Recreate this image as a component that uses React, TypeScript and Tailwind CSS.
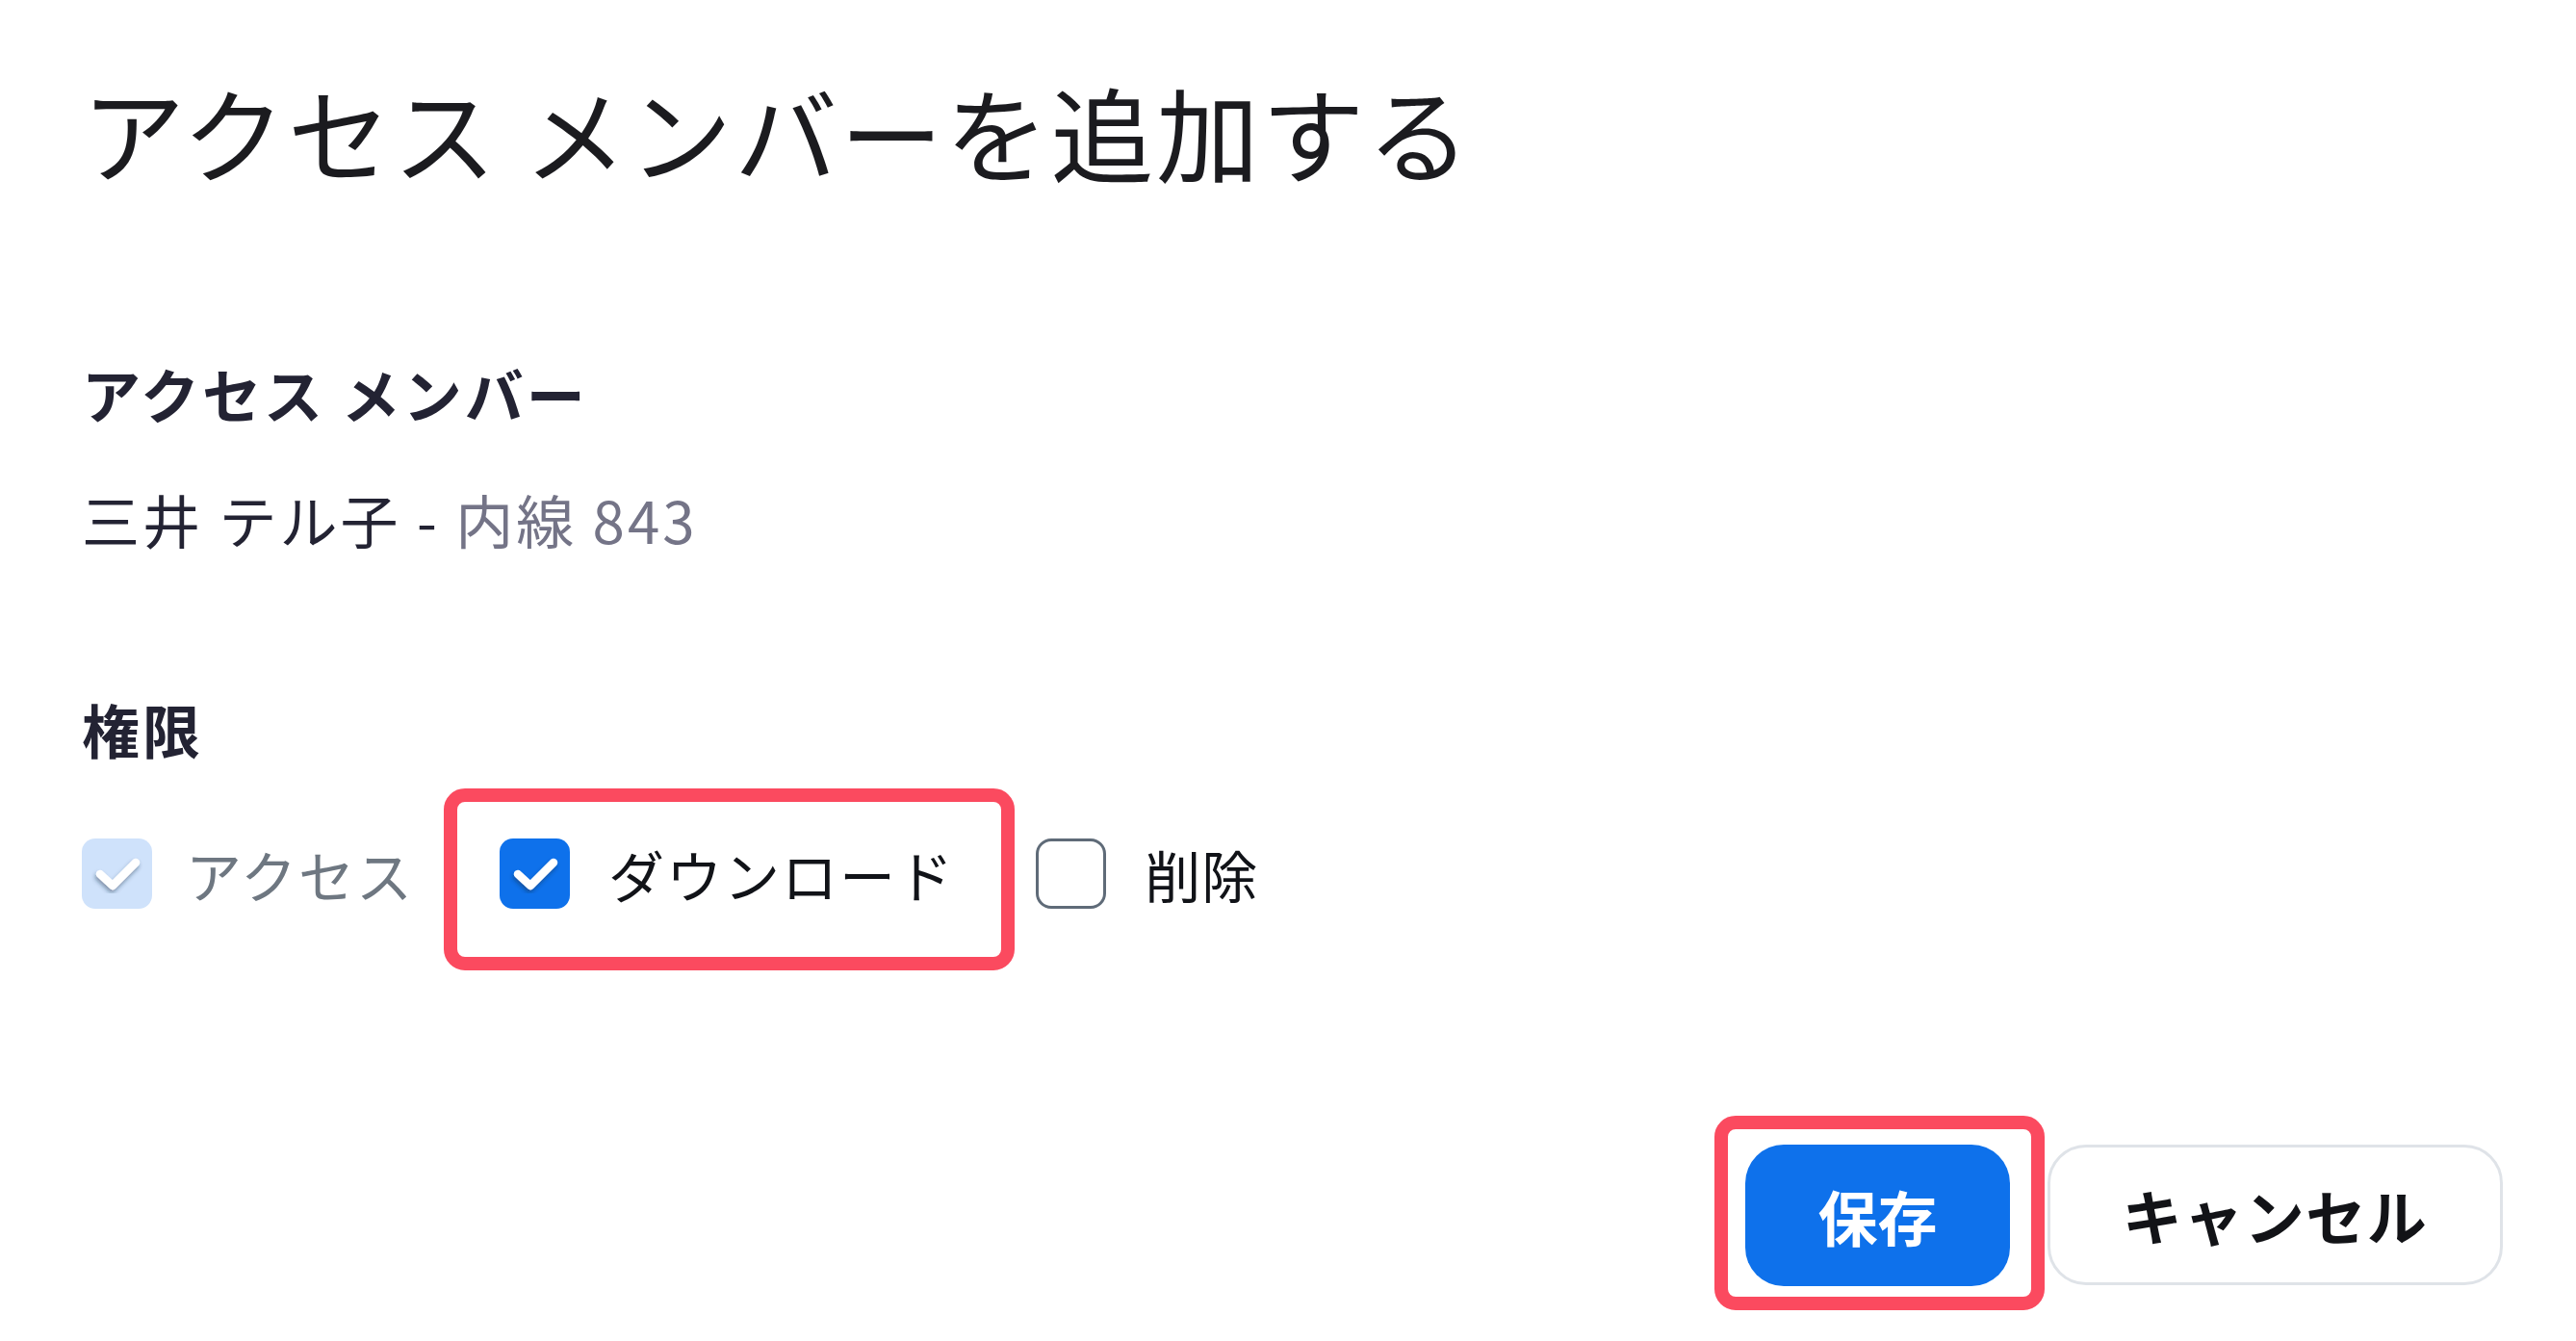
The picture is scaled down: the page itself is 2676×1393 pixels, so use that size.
import React from "react";

const FONT = '"Noto Sans CJK JP", "Noto Sans", sans-serif';

function Check({ color = "white" }: { color?: string }) {
  return (
    <svg width="73" height="73" viewBox="0 0 73 73" className="absolute inset-0">
      <defs>
        <filter id="sh" x="-30%" y="-30%" width="160%" height="160%">
          <feDropShadow dx="-1" dy="3" stdDeviation="2" floodColor="#1b2a44" floodOpacity="0.45" />
        </filter>
      </defs>
      <polyline
        points="19,37 32,49 56,25"
        fill="none"
        stroke={color}
        strokeWidth="8.5"
        strokeLinecap="round"
        strokeLinejoin="round"
        filter="url(#sh)"
      />
    </svg>
  );
}

export default function App() {
  return (
    <div className="w-[2676px] h-[1393px] bg-white overflow-hidden" style={{ fontFamily: FONT }}>
      <div className="flex flex-col pl-[85px]">
        <h1 className="mt-[83px] text-[107px] leading-[106px] font-normal text-[#1b1b1f] tracking-[2.5px]">
          アクセス メンバーを追加する
        </h1>

        <div className="mt-[190px] text-[61px] leading-[60px] font-bold text-[#232333] tracking-[3px]">アクセス メンバー</div>
        <div className="mt-[70px] text-[60px] leading-[60px] text-[#232333] tracking-[3px]">
          三井 テル子 - <span className="text-[#747487]">内線 843</span>
        </div>

        <div className="mt-[158px] text-[60px] leading-[60px] font-bold text-[#232333] tracking-[3px]">権限</div>

        <div className="mt-[84px] flex items-center">
          <div className="flex items-center gap-[35px]">
            <div className="relative w-[73px] h-[73px] rounded-[14px] bg-[#cfe2fb]">
              <Check />
            </div>
            <span className="text-[58px] leading-[60px] text-[#6e7781] tracking-[2px]">アクセス</span>
          </div>

          <div className="ml-[89px] relative flex items-center gap-[40px]">
            <div className="relative w-[73px] h-[73px] rounded-[14px] bg-[#0e71eb]">
              <Check />
            </div>
            <span className="text-[58px] leading-[60px] text-[#111318] tracking-[2px]">ダウンロード</span>
            <span className="absolute left-[-58px] top-[-52px] right-[-62px] bottom-[-64px] border-[14px] border-[#fb4a5f] rounded-[22px]" />
          </div>

          <div className="ml-[84px] flex items-center gap-[40px]">
            <div className="w-[73px] h-[73px] rounded-[16px] border-[3px] border-[#5f6b78] bg-white" />
            <span className="text-[58px] leading-[60px] text-[#111318] tracking-[1px]">削除</span>
          </div>
        </div>
      </div>

      <div className="mt-[245px] flex justify-end gap-[39px] pr-[76px]">
        <div className="relative">
          <button className="h-[147px] w-[275px] rounded-[40px] bg-[#0e71eb] text-white text-[62px] leading-[62px] font-bold">
            保存
          </button>
          <span className="absolute left-[-32px] top-[-30px] right-[-36px] bottom-[-25px] border-[14px] border-[#fb4a5f] rounded-[22px]" />
        </div>
        <button className="h-[146px] w-[473px] rounded-[40px] border-[3px] border-[#dfe3e8] bg-white text-[#121317] text-[62px] leading-[62px] font-bold tracking-[1.5px]">
          キャンセル
        </button>
      </div>
    </div>
  );
}
